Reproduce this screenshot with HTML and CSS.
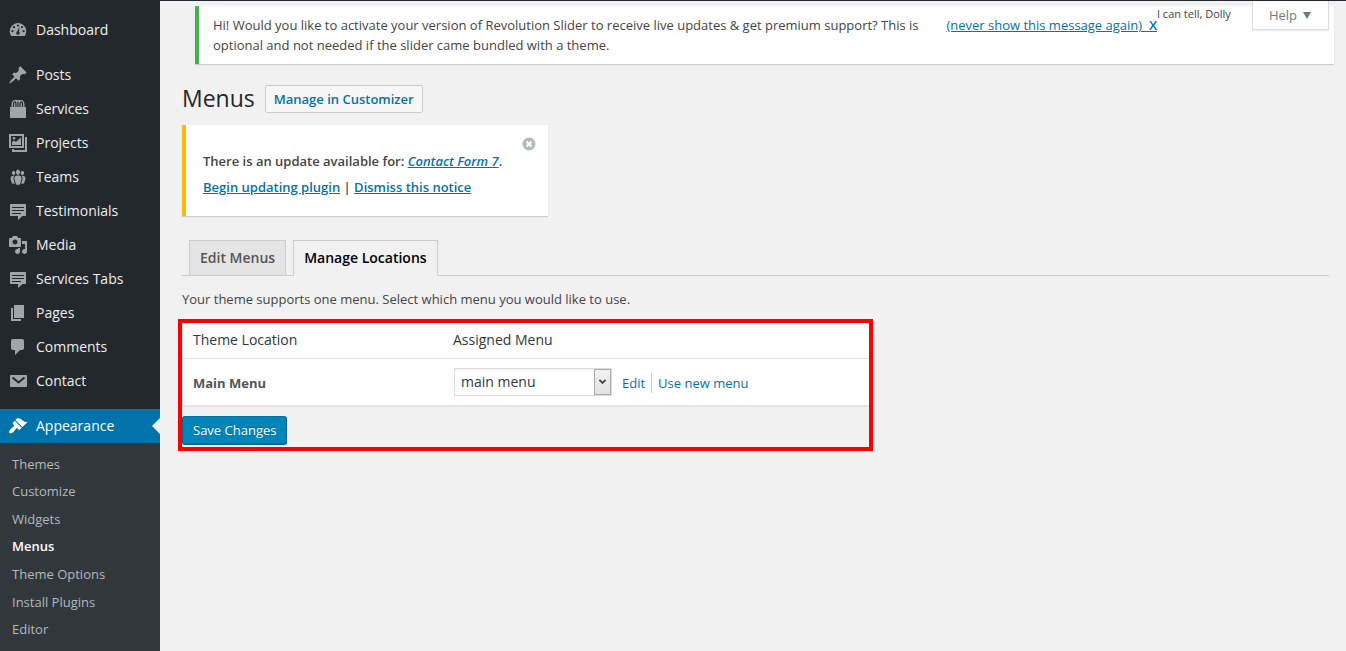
FILE: index.html
```html
<!DOCTYPE html>
<html lang="en">
<head>
<meta charset="utf-8">
<meta name="viewport" content="width=device-width, initial-scale=1">
<title>Menus</title>
<link rel="stylesheet" href="styles.css">
</head>
<body>
<div class="admin">
  <nav class="sidebar" aria-label="Main menu">
    <ul class="menu">
      <li><a class="menu-item" href="#"><svg class="icon" viewBox="0 0 20 20"><path d="M3.3 16h13.4c.9-1.300 1.500-2.800 1.500-4.700 0-4.600-3.700-8.300-8.200-8.300s-8.200 3.700-8.200 8.300c0 1.900.6 3.400 1.500 4.700z"/><g class="cut"><circle cx="10" cy="5.500" r="1.100"/><circle cx="6" cy="7.200" r="1.100"/><circle cx="14" cy="7.200" r="1.100"/><circle cx="4.400" cy="11.200" r="1.100"/><circle cx="15.600" cy="11.200" r="1.100"/><path d="M11.400 7l-.3 4.800c.8.5 1 1.700.3 2.400-.7.7-2.100.7-2.800 0-.7-.8-.5-2 .4-2.500z"/></g></svg>Dashboard</a></li>
      <li class="gap"><a class="menu-item" href="#"><svg class="icon" viewBox="0 0 20 20"><path d="M10.44 3.02l1.82-1.82 6.36 6.35-1.83 1.82c-1.05-.68-2.48-.57-3.41.36l-.75.75c-.92.93-1.04 2.35-.35 3.41l-1.83 1.82-2.41-2.41-2.8 2.79c-.42.42-3.38 2.71-3.8 2.29s1.86-3.39 2.28-3.81l2.79-2.79L4.1 9.36l1.83-1.82c1.05.69 2.48.57 3.4-.36l.75-.75c.93-.92 1.05-2.35.36-3.41z"/></svg>Posts</a></li>
      <li><a class="menu-item" href="#"><svg class="icon" viewBox="0 0 20 20"><path d="M2 8h1.500V5.500C3.500 3 5 1 7.200 1h5.600c2.200 0 3.700 2 3.700 4.500V8H18v11H2z"/><path class="cut-line handle" d="M5.500 8V5.500c0-1.500.5-2.600 1.200-2.600s1.300 1.100 1.300 2.600V8M12 8V5.500c0-1.500.5-2.600 1.300-2.600s1.200 1.100 1.200 2.600V8M10 2.500V8"/></svg>Services</a></li>
      <li><a class="menu-item" href="#"><svg class="icon" viewBox="0 0 20 20"><path fill-rule="evenodd" d="M1 1h15v14H1zM3 3v10h11V3z"/><path d="M17 4h2v15H4v-3h2v1h11z"/><path d="M4 12V9l2-1.500L8 9l4.500-4.500L13 6v6z"/><circle cx="6" cy="5.300" r="1.300"/></svg>Projects</a></li>
      <li><a class="menu-item" href="#"><svg class="icon" viewBox="0 0 20 20"><path d="M8.03 4.46c-.29 1.28.55 3.46 1.97 3.46 1.41 0 2.25-2.18 1.96-3.46-.22-.98-1.08-1.63-1.96-1.63-.89 0-1.74.65-1.97 1.63zm-4.13.9c-.25 1.08.47 2.93 1.67 2.93s1.92-1.85 1.67-2.93c-.19-.83-.92-1.39-1.67-1.39s-1.48.56-1.67 1.39zm8.860 0c-.25 1.08.47 2.93 1.66 2.93 1.2 0 1.92-1.85 1.67-2.93-.19-.83-.92-1.39-1.67-1.39-.74 0-1.47.56-1.66 1.39zm-.59 11.43l1.25-4.300C14.2 10 12.71 8.47 10 8.470c-2.72 0-4.21 1.53-3.440 4.02l1.26 4.3C8.050 17.51 9 18 10 18c.98 0 1.94-.49 2.170-1.210zm-6.100-7.630c-.49.67-.96 1.83-.42 3.59l1.12 3.79c-.34.2-.77.31-1.2.31-.85 0-1.65-.41-1.85-1.030l-1.070-3.650c-.65-2.110.61-3.4 2.92-3.400.27 0 .54.02.79.06-.1.1-.2.22-.29.33zm8.350-.39c2.310 0 3.580 1.290 2.920 3.400l-1.070 3.650c-.2.62-1 1.030-1.850 1.030-.43 0-.86-.11-1.200-.31l1.110-3.770c.55-1.780.08-2.940-.42-3.610-.08-.11-.18-.23-.28-.33.25-.04.51-.06.79-.06z"/></svg>Teams</a></li>
      <li><a class="menu-item" href="#"><svg class="icon" viewBox="0 0 20 20"><path d="M3 3h14c.6 0 1 .4 1 1v10c0 .6-.4 1-1 1h-2.500L10 19v-4H3c-.6 0-1-.4-1-1V4c0-.6.4-1 1-1z"/><path class="cut-line" d="M4 6.500h12M4 9.500h12M4 12.500h9"/></svg>Testimonials</a></li>
      <li><a class="menu-item" href="#"><svg class="icon" viewBox="0 0 20 20"><path d="M13 11V4c0-.55-.45-1-1-1h-1.67L9 1H5L3.670 3H2c-.55 0-1 .45-1 1v7c0 .55.45 1 1 1h10c.55 0 1-.45 1-1zM7 4.500c1.380 0 2.500 1.120 2.500 2.500S8.380 9.500 7 9.500 4.500 8.380 4.500 7 5.620 4.500 7 4.500zM14 6h5v10.500c0 1.380-1.120 2.500-2.500 2.500S14 17.880 14 16.500s1.120-2.500 2.500-2.500c.17 0 .34.02.5.05V9h-3V6zm-4 8.050V13h2v3.500c0 1.380-1.120 2.500-2.500 2.500S7 17.880 7 16.500 8.120 14 9.500 14c.17 0 .34.02.5.05z"/></svg>Media</a></li>
      <li><a class="menu-item" href="#"><svg class="icon" viewBox="0 0 20 20"><path d="M3 3h14c.6 0 1 .4 1 1v10c0 .6-.4 1-1 1h-2.500L10 19v-4H3c-.6 0-1-.4-1-1V4c0-.6.4-1 1-1z"/><path class="cut-line" d="M4 6.500h12M4 9.500h12M4 12.500h9"/></svg>Services Tabs</a></li>
      <li><a class="menu-item" href="#"><svg class="icon" viewBox="0 0 20 20"><path d="M6 15V2h10v13H6zm-1 1h8v2H3V5h2v11z"/></svg>Pages</a></li>
      <li><a class="menu-item" href="#"><svg class="icon" viewBox="0 0 20 20"><path d="M5 2h9c1.100 0 2 .9 2 2v7c0 1.100-.9 2-2 2h-2l-5 5v-5H5c-1.100 0-2-.9-2-2V4c0-1.100.9-2 2-2z"/></svg>Comments</a></li>
      <li><a class="menu-item" href="#"><svg class="icon" viewBox="0 0 20 20"><rect x="2" y="4" width="17" height="12" rx="1"/><path class="cut-line bold" d="M4.500 6.500l6 5 6-5"/></svg>Contact</a></li>
      <li class="gap"><a class="menu-item current" href="#"><svg class="icon" viewBox="0 0 20 20"><path d="M14.480 11.060L7.410 3.990l1.500-1.500c.5-.56 2.300-.47 3.510.32 1.210.8 1.430 1.280 2.910 2.100 1.180.64 2.450 1.260 4.450.85zm-.71.71L6.700 4.700 4.930 6.470c-.39.39-.39 1.020 0 1.410l1.060 1.060c.39.39.39 1.030 0 1.420-.6.6-1.430 1.110-2.210 1.690-.35.26-.7.53-1.010.84C1.430 14.230.4 16.080 1.400 17.070c.99 1 2.840-.03 4.180-1.360.31-.31.58-.66.85-1.020.57-.78 1.080-1.610 1.690-2.210.39-.39 1.020-.39 1.410 0l1.060 1.060c.39.39 1.020.39 1.410 0z"/></svg>Appearance</a></li>
    </ul>
    <ul class="submenu">
      <li><a href="#">Themes</a></li>
      <li><a href="#">Customize</a></li>
      <li><a href="#">Widgets</a></li>
      <li><a class="selected" href="#">Menus</a></li>
      <li><a href="#">Theme Options</a></li>
      <li><a href="#">Install Plugins</a></li>
      <li><a href="#">Editor</a></li>
    </ul>
  </nav>

  <main class="content">
    <div class="meta">
      <span class="dolly">I can tell, Dolly</span>
      <button class="help" type="button">Help <svg class="caret" viewBox="0 0 10 8"><path d="M1 1h8L5 8z"/></svg></button>
    </div>

    <div class="notice">
      <p>Hi! Would you like to activate your version of Revolution Slider to receive live updates &amp; get premium support? This is optional and not needed if the slider came bundled with a theme.</p>
      <a href="#">(never show this message again) &nbsp;<b>X</b></a>
    </div>

    <header class="heading">
      <h1>Menus</h1>
      <a class="title-action" href="#">Manage in Customizer</a>
    </header>

    <section class="update">
      <button class="dismiss" type="button" aria-label="Dismiss"><svg viewBox="0 0 14 14"><circle cx="7" cy="7" r="6.500"/><path d="M4.500 4.500l5 5M9.500 4.500l-5 5"/></svg></button>
      <p>There is an update available for: <a href="#"><em>Contact Form 7</em></a>.</p>
      <p><a href="#">Begin updating plugin</a> | <a href="#">Dismiss this notice</a></p>
    </section>

    <nav class="tabs" aria-label="Menu sections">
      <a class="tab" href="#">Edit Menus</a>
      <a class="tab active" href="#">Manage Locations</a>
    </nav>

    <p class="intro">Your theme supports one menu. Select which menu you would like to use.</p>

    <form class="locations">
      <table class="table">
        <thead>
          <tr><th class="col-name" scope="col">Theme Location</th><th scope="col">Assigned Menu</th></tr>
        </thead>
        <tbody>
          <tr>
            <td><label class="location" for="main-menu">Main Menu</label></td>
            <td>
              <div class="assign">
                <span class="picker">
                  <select id="main-menu"><option>main menu</option></select>
                  <svg class="picker-arrow" viewBox="0 0 17 26"><path d="M5 10.500l3.500 3.500 3.500-3.500"/></svg>
                </span>
                <a class="edit" href="#">Edit</a>
                <a class="new" href="#">Use new menu</a>
              </div>
            </td>
          </tr>
        </tbody>
      </table>
      <button class="save" type="submit">Save Changes</button>
    </form>
  </main>
</div>
</body>
</html>
```
FILE: styles.css
```css
* {
  box-sizing: border-box;
}

body {
  margin: 0;
  background: #f1f1f1;
  color: #444;
  font: 13px/20px "Open Sans", sans-serif;
}

p, h1, ul {
  margin: 0;
  padding: 0;
}

ul {
  list-style: none;
}

a {
  color: #0073aa;
}

button, select {
  font-family: inherit;
}

.admin {
  display: flex;
  min-height: 100vh;
  border-top: 1px solid #23282d;
}

/* Sidebar */
.sidebar {
  flex: 0 0 160px;
  padding-top: 12px;
  background: #23282d;
}

.gap {
  margin-top: 11px;
}

.menu-item {
  position: relative;
  display: flex;
  align-items: center;
  gap: 8px;
  height: 34px;
  padding-left: 8px;
  color: #eee;
  font-size: 14px;
  text-decoration: none;
}

.icon {
  width: 20px;
  height: 20px;
  fill: #a0a5aa;
}

.cut {
  fill: #23282d;
}

.cut-line {
  fill: none;
  stroke: #23282d;
  stroke-width: 1;
}

.handle {
  stroke-width: 1.2;
}

.bold {
  stroke-width: 2;
}

.current {
  background: #0073aa;
  color: #fff;
}

.current .icon {
  fill: #fff;
}

.current::after {
  content: "";
  position: absolute;
  top: 9px;
  right: 0;
  border: 8px solid transparent;
  border-left-width: 0;
  border-right-color: #f1f1f1;
}

.submenu {
  display: grid;
  grid-auto-rows: 1fr;
  height: 208px;
  padding: 7px 12px 8px;
  background: #32373c;
}

.submenu li {
  display: flex;
  align-items: center;
}

.submenu a {
  color: #b4b9be;
  text-decoration: none;
}

.submenu .selected {
  color: #fff;
  font-weight: 600;
}

/* Content */
.content {
  position: relative;
  flex: 1;
  min-width: 0;
  padding: 5px 17px 20px 22px;
}

.meta {
  position: absolute;
  top: 0;
  right: 17px;
  display: flex;
  align-items: flex-start;
  gap: 21px;
}

.dolly {
  padding-top: 3px;
  font-size: 11px;
}

.help {
  display: flex;
  align-items: center;
  gap: 5px;
  height: 29px;
  padding: 0 16px;
  border: 1px solid #ddd;
  border-top: 0;
  background: #fff;
  box-shadow: 0 1px 1px rgba(0, 0, 0, 0.08);
  color: #777;
  font-size: 13px;
}

.caret {
  width: 10px;
  height: 8px;
  fill: #72777c;
}

.notice {
  display: flex;
  justify-content: space-between;
  margin: 0 -5px 0 13px;
  padding: 9px 177px 9px 14px;
  border-left: 4px solid #46b450;
  background: #fff;
  box-shadow: 0 1px 1px rgba(0, 0, 0, 0.15);
}

.notice p {
  max-width: 720px;
}

.notice a {
  white-space: nowrap;
}

.notice b {
  font-weight: 600;
}

.heading {
  display: flex;
  align-items: center;
  gap: 10px;
  margin: 20px 0 12px;
}

.heading h1 {
  color: #23282d;
  font-size: 23px;
  font-weight: 400;
  line-height: 29px;
}

.title-action {
  margin-top: 1px;
  padding: 3px 8px;
  border: 1px solid #ccc;
  border-radius: 2px;
  background: #f7f7f7;
  font-weight: 600;
  text-decoration: none;
}

.update {
  position: relative;
  width: fit-content;
  padding: 26px 46px 19px 17px;
  border-left: 4px solid #ffb900;
  background: #fff;
  box-shadow: 0 1px 1px rgba(0, 0, 0, 0.15);
  font-weight: 600;
}

.update p + p {
  margin-top: 6px;
}

.dismiss {
  position: absolute;
  top: 12px;
  right: 12px;
  width: 14px;
  height: 14px;
  padding: 0;
  border: 0;
  background: none;
}

.dismiss svg {
  display: block;
  fill: #b4b9be;
  stroke: #fff;
  stroke-width: 2;
}

.dismiss circle {
  stroke: none;
}

.tabs {
  display: flex;
  gap: 7px;
  margin-top: 24px;
  padding-left: 7px;
  border-bottom: 1px solid #ccc;
}

.tab {
  margin-bottom: -1px;
  padding: 7px 10px;
  border: 1px solid #ccc;
  background: #e4e4e4;
  color: #555;
  font-size: 14px;
  font-weight: 600;
  text-decoration: none;
}

.tab.active {
  border-bottom-color: #f1f1f1;
  background: #f1f1f1;
  color: #000;
}

.intro {
  margin: 13px 0 10px;
}

/* Theme locations */
.locations {
  width: 695px;
  max-width: 100%;
  margin-left: -4px;
  padding-bottom: 2px;
  border: 4px solid #f00;
}

.table {
  width: 100%;
  border-collapse: separate;
  border-spacing: 0;
  border-left: 1px solid #e5e5e5;
  background: #fff;
  box-shadow: 0 1px 1px rgba(0, 0, 0, 0.04);
}

.table th {
  height: 36px;
  padding: 0 10px 2px;
  border-bottom: 1px solid #e1e1e1;
  color: #32373c;
  font-size: 14px;
  font-weight: 400;
  text-align: left;
}

.table .col-name {
  width: 260px;
}

.table td {
  height: 47px;
  padding: 0 10px;
  border-bottom: 1px solid #e5e5e5;
}

.location {
  display: block;
  padding-top: 2px;
  color: #555;
  font-weight: 700;
}

.assign {
  display: flex;
  align-items: center;
}

.assign a {
  margin-top: 2px;
  text-decoration: none;
}

.picker {
  position: relative;
  margin: 0 10px 0 1px;
}

.picker select {
  display: block;
  width: 158px;
  height: 28px;
  padding: 0 24px 2px 6px;
  border: 1px solid #ddd;
  border-radius: 0;
  background: #fff;
  box-shadow: inset 0 1px 2px rgba(0, 0, 0, 0.07);
  color: #32373c;
  font-size: 14px;
  appearance: none;
}

.picker-arrow {
  position: absolute;
  top: 1px;
  right: 1px;
  width: 17px;
  height: 26px;
  border: 1px solid #aaa;
  background: linear-gradient(#f2f2f2, #e2e2e2);
  fill: none;
  stroke: #444;
  stroke-width: 2;
  pointer-events: none;
}

.edit {
  padding-right: 6px;
  border-right: 1px solid #ccc;
}

.new {
  padding-left: 6px;
}

.save {
  display: block;
  height: 29px;
  margin-top: 10px;
  padding: 0 10px 2px;
  border: 1px solid #006799;
  border-top-color: #0073aa;
  border-radius: 3px;
  background: #0085ba;
  box-shadow: inset 0 -1px 0 #006799;
  color: #fff;
  font-size: 13px;
  text-shadow: 0 -1px 1px #006799;
}
```
